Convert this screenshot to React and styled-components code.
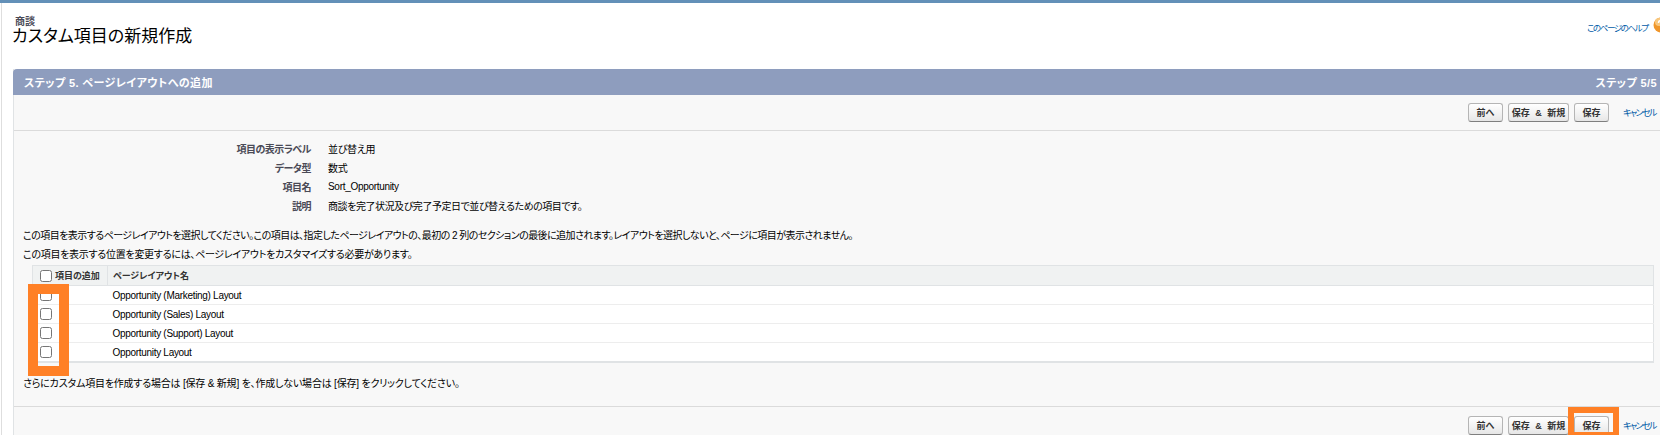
import React from 'react';
import styled, { createGlobalStyle } from 'styled-components';

const GlobalStyle = createGlobalStyle`
  html, body {
    margin: 0;
    height: 435px;
    overflow: hidden;
    background: #fff;
  }

  body {
    font-family: "Liberation Sans", "Noto Sans CJK JP", sans-serif;
    font-size: 10px;
    font-feature-settings: "palt";
    color: #000;
  }
`;

const TopBar = styled.div`
  height: 3px;
  background: #6390b8;
`;

const Page = styled.div`
  position: relative;
  width: 1668px;
  height: 432px;
  box-sizing: border-box;
  padding-left: 13px;
  overflow: hidden;

  &::before {
    content: '';
    position: absolute;
    left: 1px;
    top: 0;
    bottom: 0;
    width: 1px;
    background: #dedede;
  }
`;

const PageHeader = styled.div`
  display: flex;
  justify-content: space-between;
  height: 66px;
  box-sizing: border-box;
  padding-top: 14px;
`;

const TitleBlock = styled.div`
  margin-left: -1px;
`;

const Crumb = styled.div`
  font-size: 10px;
  line-height: 10px;
  font-weight: bold;
  color: #4a4a56;
  padding-left: 3px;
`;

const Title = styled.h1`
  margin: 0;
  font-size: 17px;
  line-height: 20px;
  font-weight: normal;
  color: #000;
`;

const HelpLink = styled.a`
  display: flex;
  align-items: center;
  gap: 5px;
  height: 16px;
  margin: 2px 0 0;
  width: 81px;
  color: #015ba7;
`;

const HelpText = styled.span`
  flex: none;
  width: 61px;
  font-size: 8.5px;
  letter-spacing: -1.4px;
  white-space: nowrap;
`;

const HelpIcon = styled.svg`
  flex: none;
  width: 16px;
  height: 16px;
  margin-bottom: 4px;
`;

const Panel = styled.div`
  background: #f8f8f8;
  border-left: 1px solid #e0e3e5;
  height: 366px;
`;

const PanelTitle = styled.div`
  display: flex;
  justify-content: space-between;
  align-items: center;
  height: 26px;
  box-sizing: border-box;
  margin-left: -1px;
  padding: 0 11px 0 11px;
  background: #8e9dbe;
  border-radius: 4px 0 0 0;
  color: #fff;
  font-size: 11px;
  font-weight: bold;
  letter-spacing: 0.4px;
  white-space: nowrap;
`;

const ButtonRow = styled.div`
  display: flex;
  justify-content: flex-end;
  align-items: center;
  height: 36px;
  box-sizing: border-box;
  padding: ${(p) => (p.$bottom ? '1px' : '0')} 12px 0 0;
  border-bottom: ${(p) => (p.$bottom ? '0' : '1px solid #dbdbdb')};
  border-top: ${(p) => (p.$bottom ? '1px solid #dbdbdb' : '0')};
`;

const Button = styled.button`
  height: 19px;
  width: ${(p) => p.$width}px;
  margin-left: 5px;
  padding: 0;
  border: 1px solid #b5b5b5;
  border-bottom-color: #7f7f7f;
  border-radius: 3px;
  background: linear-gradient(#fff, #f1f1f1 60%, #e6e6e6);
  color: #333;
  font: bold 9px "Liberation Sans", "Noto Sans CJK JP", sans-serif;
  font-feature-settings: "palt";
  word-spacing: 3px;
  white-space: pre;
`;

const CancelLink = styled.a`
  margin-left: 14px;
  width: 33px;
  color: #015ba7;
  font-size: 9px;
  letter-spacing: -1.6px;
  white-space: nowrap;
`;

const Details = styled.dl`
  display: grid;
  grid-template-columns: 297px 1fr;
  column-gap: 17px;
  grid-auto-rows: 19px;
  align-items: center;
  margin: 8px 0 0;
`;

const DetailLabel = styled.dt`
  text-align: right;
  font-weight: bold;
  color: #4a4a56;
  letter-spacing: -0.5px;
`;

const DetailValue = styled.dd`
  margin: 0;
  letter-spacing: ${(p) => p.$spacing}px;
`;

const Notes = styled.div`
  margin-top: 11px;
`;

const Note = styled.p`
  margin: 0;
  padding-left: 9px;
  line-height: 19px;
  letter-spacing: ${(p) => p.$spacing}px;
  white-space: nowrap;
`;

const LayoutTable = styled.table`
  width: 1622px;
  margin: 1px 0 0 18px;
  border-collapse: collapse;
  background: #fff;
  border: 1px solid #e0e3e5;
  border-bottom-width: 2px;
`;

const HeadCell = styled.th`
  height: 19px;
  width: ${(p) => p.$width || 'auto'};
  padding: 0 0 0 ${(p) => p.$pad}px;
  text-align: left;
  font-size: 9px;
  color: #333;
  background: #f0f2f2;
  border-left: 1px solid #e0e3e5;
  border-bottom: 1px solid #e0e3e5;
  white-space: nowrap;
`;

const HeadLabel = styled.label`
  display: flex;
  align-items: center;
  gap: 3px;
`;

const Cell = styled.td`
  height: 18px;
  padding: 0 0 0 ${(p) => p.$pad}px;
  border-bottom: 1px solid #ededed;
  letter-spacing: -0.3px;

  tr:last-child > & {
    height: 18px;
    border-bottom: 0;
  }
`;

const Check = styled.input.attrs({ type: 'checkbox' })`
  display: block;
  margin: 0;
  width: 12px;
  height: 12px;
`;

const FootNote = styled.p`
  margin: 0;
  padding: 14px 0 0 9px;
  line-height: 14px;
  letter-spacing: -0.2px;
`;

const Spacer = styled.div`
  height: 15px;
`;

// annotation boxes drawn over the screenshot
const Highlight = styled.div`
  position: absolute;
  left: ${(p) => p.$x}px;
  top: ${(p) => p.$y}px;
  width: ${(p) => p.$w}px;
  height: ${(p) => p.$h}px;
  box-sizing: border-box;
  border: ${(p) => p.$line}px solid #ff8026;
  pointer-events: none;
`;

const layouts = [
  'Opportunity (Marketing) Layout',
  'Opportunity (Sales) Layout',
  'Opportunity (Support) Layout',
  'Opportunity Layout',
];

const details = [
  ['項目の表示ラベル', '並び替え用', -0.3],
  ['データ型', '数式', -0.3],
  ['項目名', 'Sort_Opportunity', -0.3],
  ['説明', '商談を完了状況及び完了予定日で並び替えるための項目です。', -0.45],
];

const Buttons = () => (
  <>
    <Button $width={35}>前へ</Button>
    <Button $width={61}>{'保存 & 新規'}</Button>
    <Button $width={35}>保存</Button>
    <CancelLink>キャンセル</CancelLink>
  </>
);

const App = () => {
  return (
    <>
      <GlobalStyle />
      <TopBar />
      <Page>
        <PageHeader>
          <TitleBlock>
            <Crumb>商談</Crumb>
            <Title>カスタム項目の新規作成</Title>
          </TitleBlock>
          <HelpLink>
            <HelpText>このページのヘルプ</HelpText>
            <HelpIcon viewBox="0 0 16 16">
              <circle cx="8" cy="8" r="7.5" fill="#f0962a" />
              <circle cx="6" cy="5" r="4" fill="#f8c77e" />
              <path d="M5.5 6a2.5 2.5 0 1 1 3.6 2.2c-.7.4-1.1.8-1.1 1.6" fill="none" stroke="#fff" strokeWidth="1.6" />
              <circle cx="8" cy="12" r="1" fill="#fff" />
            </HelpIcon>
          </HelpLink>
        </PageHeader>
        <Panel>
          <PanelTitle>
            <span>ステップ 5. ページレイアウトへの追加</span>
            <span>ステップ 5/5</span>
          </PanelTitle>
          <ButtonRow>
            <Buttons />
          </ButtonRow>
          <Details>
            {details.map(([label, value, spacing]) => (
              <React.Fragment key={label}>
                <DetailLabel>{label}</DetailLabel>
                <DetailValue $spacing={spacing}>{value}</DetailValue>
              </React.Fragment>
            ))}
          </Details>
          <Notes>
            <Note $spacing={-0.55}>この項目を表示するページレイアウトを選択してください。この項目は、指定したページレイアウトの、最初の 2 列のセクションの最後に追加されます。レイアウトを選択しないと、ページに項目が表示されません。</Note>
            <Note $spacing={-0.28}>この項目を表示する位置を変更するには、ページレイアウトをカスタマイズする必要があります。</Note>
          </Notes>
          <LayoutTable>
            <thead>
              <tr>
                <HeadCell $pad={7} $width="67px">
                  <HeadLabel>
                    <Check />
                    項目の追加
                  </HeadLabel>
                </HeadCell>
                <HeadCell $pad={5}>ページレイアウト名</HeadCell>
              </tr>
            </thead>
            <tbody>
              {layouts.map((name) => (
                <tr key={name}>
                  <Cell $pad={7}>
                    <Check />
                  </Cell>
                  <Cell $pad={5}>{name}</Cell>
                </tr>
              ))}
            </tbody>
          </LayoutTable>
          <FootNote>さらにカスタム項目を作成する場合は [保存 &amp; 新規] を、作成しない場合は [保存] をクリックしてください。</FootNote>
          <Spacer />
          <ButtonRow $bottom>
            <Buttons />
          </ButtonRow>
        </Panel>
        <Highlight $x={28} $y={281} $w={41} $h={92} $line={10} />
        <Highlight $x={1568} $y={404} $w={51} $h={31} $line={6} />
      </Page>
    </>
  );
};

export default App;
